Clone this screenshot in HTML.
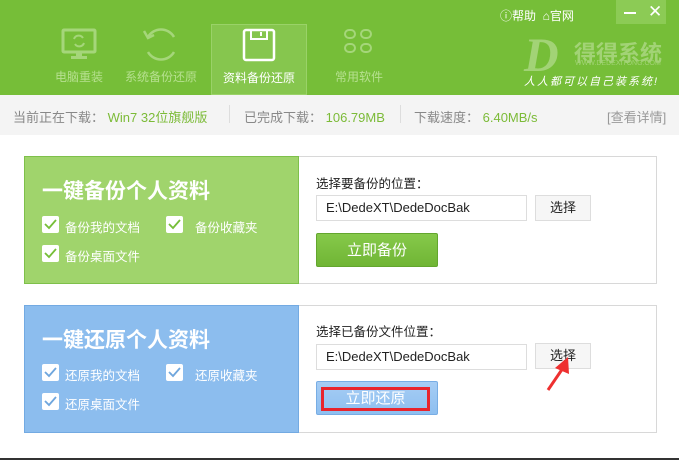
<!DOCTYPE html>
<html><head><meta charset="utf-8"><style>
*{margin:0;padding:0;box-sizing:border-box}
body{width:679px;height:460px;overflow:hidden;background:#fff;font-family:"Liberation Sans","Noto Sans CJK SC",sans-serif;position:relative}
.a{position:absolute}
.hdr{left:0;top:0;width:679px;height:95px;background:#76be38}
.tab{top:24px;width:96px;height:71px;text-align:center;color:#b6e08f;font-size:12px}
.tab span{position:absolute;left:0;right:0;top:44px}
.bar{left:0;top:95px;width:679px;height:40px;background:#f4f4f4;font-size:13px;color:#888}
.g{color:#7cbb38}
.panel{left:24px;width:633px;height:128px;border:1px solid #d8d8d8;background:#fff}
.lp{position:absolute;left:-1px;top:-1px;width:275px;height:128px}
.ttl{position:absolute;left:17px;top:18px;color:#fff;font-size:21px;font-weight:bold}
.cb{position:absolute;width:17px;height:17px;background:#fff;border-radius:2px}
.cb svg{position:absolute;left:2px;top:3px}
.ct{position:absolute;color:#fff;font-size:12.5px}
.lbl{position:absolute;left:291px;font-size:12.5px;color:#222}
.inp{position:absolute;left:291px;width:211px;height:26px;border:1px solid #ddd;font-size:13px;padding:4px 9px;color:#222}
.sel{position:absolute;left:510px;width:56px;height:26px;border:1px solid #ddd;background:#f6f6f6;font-size:13px;text-align:center;line-height:24px;color:#222}
.btn{position:absolute;left:291px;width:122px;height:34px;color:#fff;font-size:15px;text-align:center;line-height:33px;border-radius:2px}
</style></head><body>
<div class="a hdr"></div>
<div class="a tab" style="left:31px"><svg width="40" height="36" style="margin-top:3px"><rect x="4" y="3" width="32" height="22" rx="1" fill="none" stroke="#a5d67a" stroke-width="3"/><rect x="17" y="25" width="6" height="4" fill="#a5d67a"/><rect x="12" y="29" width="16" height="3" fill="#a5d67a"/><path d="M15 12a5 5 0 0 1 9-1M25 16a5 5 0 0 1-9 1" stroke="#a5d67a" stroke-width="2" fill="none"/></svg><span>电脑重装</span></div>
<div class="a tab" style="left:113px"><svg width="40" height="40"><path d="M33 13A15 15 0 0 0 7 13M7 28A15 15 0 0 0 33 28" stroke="#a5d67a" stroke-width="2.5" fill="none"/><path d="M3 7l4 7 6-3" stroke="#a5d67a" stroke-width="2.5" fill="none"/></svg><span>系统备份还原</span></div>
<div class="a tab" style="left:211px;background:#86c64e;border:1px solid #9ad268;color:#fff"><svg width="36" height="36" style="margin-top:2px"><rect x="3" y="3" width="30" height="30" rx="2" fill="none" stroke="#fff" stroke-width="2.5"/><path d="M10 3v9h16V3M20 5v4" stroke="#fff" stroke-width="2" fill="none"/></svg><span>资料备份还原</span></div>
<div class="a tab" style="left:311px"><svg width="40" height="38"><g fill="none" stroke="#a5d67a" stroke-width="2"><rect x="6" y="6" width="10" height="8" rx="4"/><rect x="22" y="6" width="10" height="8" rx="4"/><rect x="6" y="20" width="10" height="8" rx="4"/><rect x="22" y="20" width="10" height="8" rx="4"/></g></svg><span>常用软件</span></div>
<div class="a" style="left:500px;top:7px;color:#fff;font-size:12px">ⓘ帮助 &nbsp;⌂官网</div>
<div class="a" style="left:616px;top:0;width:50px;height:24px;background:#8ccb55"></div>
<div class="a" style="left:624px;top:12px;width:12px;height:2px;background:#fff"></div>
<div class="a" style="left:648px;top:2px;color:#fff;font-size:17px">✕</div>
<div class="a" style="left:524px;top:28px;color:#a2d376;font-size:48px;font-style:italic;font-family:'Liberation Serif',serif;font-weight:bold">D</div>
<div class="a" style="left:574px;top:36px;color:#a2d376;font-size:22px;font-weight:bold">得得系统</div>
<div class="a" style="left:575px;top:60px;color:#a2d376;font-size:7px">WWW.DEDEXITONG.COM</div>
<div class="a" style="left:524px;top:73px;color:#fff;font-size:11px;font-style:italic;letter-spacing:2px">人人都可以自己装系统!</div>
<div class="a bar"><div class="a" style="left:13px;top:12px">当前正在下载： <span class="g">Win7 32位旗舰版</span></div><div class="a" style="left:229px;top:10px;width:1px;height:18px;background:#ddd"></div><div class="a" style="left:244px;top:12px">已完成下载： <span class="g">106.79MB</span></div><div class="a" style="left:400px;top:10px;width:1px;height:18px;background:#ddd"></div><div class="a" style="left:414px;top:12px">下载速度： <span class="g">6.40MB/s</span></div><div class="a" style="left:607px;top:12px;color:#999">[查看详情]</div></div>

<div class="a panel" style="top:156px">
<div class="lp" style="background:#a0d46c;border:1px solid #7ec04a">
<div class="ttl">一键备份个人资料</div>
<div class="cb" style="left:17px;top:59px"><svg width="13" height="11"><path d="M1 5l4 4 7-8" stroke="#76be38" stroke-width="1.8" fill="none"/></svg></div><div class="ct" style="left:40px;top:60px">备份我的文档</div>
<div class="cb" style="left:141px;top:59px"><svg width="13" height="11"><path d="M1 5l4 4 7-8" stroke="#76be38" stroke-width="1.8" fill="none"/></svg></div><div class="ct" style="left:170px;top:60px">备份收藏夹</div>
<div class="cb" style="left:17px;top:88px"><svg width="13" height="11"><path d="M1 5l4 4 7-8" stroke="#76be38" stroke-width="1.8" fill="none"/></svg></div><div class="ct" style="left:40px;top:89px">备份桌面文件</div>
</div>
<div class="lbl" style="top:16px">选择要备份的位置：</div>
<div class="inp" style="top:38px">E:\DedeXT\DedeDocBak</div>
<div class="sel" style="top:38px">选择</div>
<div class="btn" style="top:76px;background:linear-gradient(#86c94a,#70b535);border:1px solid #63a62e">立即备份</div>
</div>

<div class="a panel" style="top:305px">
<div class="lp" style="background:#8cbdee;border:1px solid #73aae2">
<div class="ttl">一键还原个人资料</div>
<div class="cb" style="left:17px;top:58px"><svg width="13" height="11"><path d="M1 5l4 4 7-8" stroke="#6fa6dd" stroke-width="1.8" fill="none"/></svg></div><div class="ct" style="left:40px;top:59px">还原我的文档</div>
<div class="cb" style="left:141px;top:58px"><svg width="13" height="11"><path d="M1 5l4 4 7-8" stroke="#6fa6dd" stroke-width="1.8" fill="none"/></svg></div><div class="ct" style="left:170px;top:59px">还原收藏夹</div>
<div class="cb" style="left:17px;top:87px"><svg width="13" height="11"><path d="M1 5l4 4 7-8" stroke="#6fa6dd" stroke-width="1.8" fill="none"/></svg></div><div class="ct" style="left:40px;top:88px">还原桌面文件</div>
</div>
<div class="lbl" style="top:15px">选择已备份文件位置：</div>
<div class="inp" style="top:38px">E:\DedeXT\DedeDocBak</div>
<div class="sel" style="top:37px">选择</div>
<div class="btn" style="top:75px;background:linear-gradient(#a6cdf4,#8ebff0);border:1px solid #78ade4"></div>
<div class="a" style="left:296px;top:81px;width:109px;height:24px;border:3px solid #e8242c;color:#fff;font-size:15px;text-align:center;line-height:18px">立即还原</div>
<svg class="a" style="left:518px;top:46px" width="32" height="42"><path d="M5 38L20 16" stroke="#ee3030" stroke-width="3"/><path d="M25 5L12 16l14 6z" fill="#ee3030"/></svg>
</div>
<div class="a" style="left:0;top:458px;width:679px;height:2px;background:#333"></div>
</body></html>
